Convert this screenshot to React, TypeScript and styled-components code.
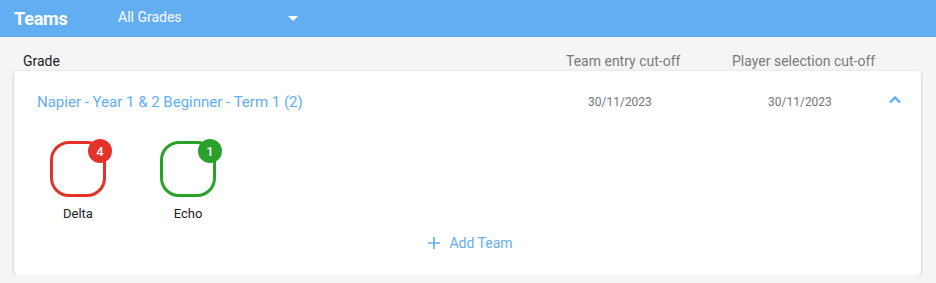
import React, { FC, useState } from "react";
import styled, { createGlobalStyle } from "styled-components";

const GlobalStyle = createGlobalStyle`
  body {
    margin: 0;
    background: #f5f5f5;
    font-family: Roboto, "Liberation Sans", sans-serif;
  }
`;

const Header = styled.header`
  height: 37px;
  background: #63aef2;
  display: flex;
  align-items: center;
  padding: 0 14px;
  color: #fff;
`;

const Title = styled.h1`
  margin: 0;
  font-size: 18px;
  font-weight: 700;
  width: 104px;
  letter-spacing: -0.2px;
`;

const GradeSelect = styled.div`
  display: flex;
  align-items: center;
  justify-content: space-between;
  width: 180px;
  font-size: 14px;
  margin-top: -4px;
`;

const Caret = styled.span`
  width: 0;
  height: 0;
  border-left: 5px solid transparent;
  border-right: 5px solid transparent;
  border-top: 5px solid #fff;
  margin-top: 4px;
`;

const Main = styled.main`
  padding: 14px 14px 0;
`;

const ColumnHeads = styled.div`
  display: grid;
  grid-template-columns: 1fr 166px 190px;
  padding: 2px 0 0 9px;
  height: 18px;
  font-size: 14px;
  color: #222;
`;

const ColHead = styled.span<{ $muted?: boolean }>`
  color: ${(p) => (p.$muted ? "#7a7a7a" : "#222")};
`;

const Card = styled.section`
  background: #fff;
  border-radius: 4px;
  box-shadow: 0 1px 3px rgba(0, 0, 0, 0.25);
  width: 907px;
`;

const GradeRow = styled.div`
  display: grid;
  grid-template-columns: 1fr 180px 120px 33px;
  align-items: center;
  height: 62px;
  padding-left: 23px;
`;

const GradeName = styled.span`
  color: #63aef2;
  font-size: 15px;
`;

const CutOff = styled.span`
  color: #757575;
  font-size: 12px;
`;

const Chevron = styled.button`
  border: 0;
  background: none;
  padding: 0;
  display: flex;
  cursor: pointer;
  margin-top: -4px;
`;

const TeamList = styled.div`
  display: flex;
  gap: 38px;
  padding: 8px 0 0 28px;
`;

const TeamItem = styled.div`
  display: flex;
  flex-direction: column;
  align-items: center;
  width: 72px;
`;

const TeamTile = styled.div<{ $color: string }>`
  position: relative;
  width: 50px;
  height: 50px;
  border: 3px solid ${(p) => p.$color};
  border-radius: 19px;
`;

const Badge = styled.span<{ $color: string }>`
  position: absolute;
  top: -5px;
  right: -9px;
  width: 24px;
  height: 24px;
  border-radius: 50%;
  background: ${(p) => p.$color};
  color: #fff;
  font-size: 13px;
  font-weight: 500;
  display: flex;
  align-items: center;
  justify-content: center;
`;

const TeamName = styled.span`
  margin-top: 9px;
  font-size: 13px;
  color: #222;
`;

const AddRow = styled.div`
  display: flex;
  justify-content: center;
  padding: 14px 0 24px 6px;
`;

const AddButton = styled.button`
  border: 0;
  background: none;
  display: flex;
  align-items: center;
  gap: 9px;
  color: #63aef2;
  font-family: inherit;
  font-size: 14px;
  cursor: pointer;
  padding: 0;
`;

const teams = [
  { name: "Delta", count: 4, color: "#e3322a" },
  { name: "Echo", count: 1, color: "#2aa12a" },
];

const App: FC = () => {
  const [open, setOpen] = useState(true);

  return (
    <>
      <GlobalStyle />
      <Header>
        <Title>Teams</Title>
        <GradeSelect>
          All Grades
          <Caret />
        </GradeSelect>
      </Header>
      <Main>
        <ColumnHeads>
          <ColHead>Grade</ColHead>
          <ColHead $muted>Team entry cut-off</ColHead>
          <ColHead $muted>Player selection cut-off</ColHead>
        </ColumnHeads>
        <Card>
          <GradeRow>
            <GradeName>Napier - Year 1 &amp; 2 Beginner - Term 1 (2)</GradeName>
            <CutOff>30/11/2023</CutOff>
            <CutOff>30/11/2023</CutOff>
            <Chevron onClick={() => setOpen(!open)}>
              <svg width="14" height="10" viewBox="0 0 14 10">
                <path
                  d="M2 7.5 7 2.5l5 5"
                  fill="none"
                  stroke="#63aef2"
                  strokeWidth="2.4"
                />
              </svg>
            </Chevron>
          </GradeRow>
          {open && (
            <>
              <TeamList>
                {teams.map((t) => (
                  <TeamItem key={t.name}>
                    <TeamTile $color={t.color}>
                      <Badge $color={t.color}>{t.count}</Badge>
                    </TeamTile>
                    <TeamName>{t.name}</TeamName>
                  </TeamItem>
                ))}
              </TeamList>
              <AddRow>
                <AddButton>
                  <svg width="12" height="12" viewBox="0 0 12 12">
                    <path d="M6 0v12M0 6h12" stroke="#63aef2" strokeWidth="1.6" />
                  </svg>
                  Add Team
                </AddButton>
              </AddRow>
            </>
          )}
        </Card>
      </Main>
    </>
  );
};

export default App;
